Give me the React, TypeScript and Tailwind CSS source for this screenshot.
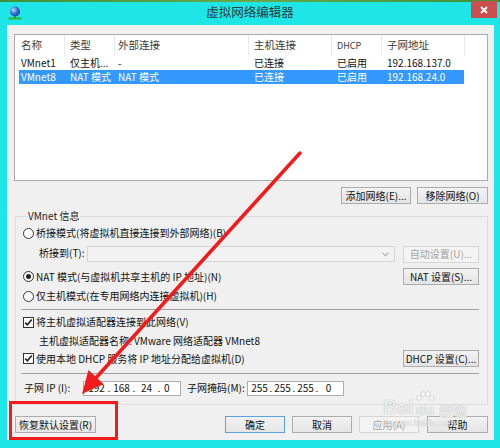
import React from "react";

const FONT = '"Noto Sans CJK SC", "Noto Sans", sans-serif';

function Btn({
  children,
  className = "",
  disabled = false,
  focused = false,
}: {
  children: React.ReactNode;
  className?: string;
  disabled?: boolean;
  focused?: boolean;
}) {
  const base =
    "h-[17px] flex items-center justify-center text-[10px] leading-none whitespace-nowrap border ";
  const look = disabled
    ? "border-[#d5d5d5] bg-[#f4f4f4] text-[#a3a3a3]"
    : focused
    ? "border-[#5ea1e6] bg-linear-to-b from-[#f2f2f2] to-[#e6e6e6] text-[#111]"
    : "border-[#acacac] bg-linear-to-b from-[#f2f2f2] to-[#e5e5e5] text-[#111]";
  return <div className={base + look + " " + className}>{children}</div>;
}

function Radio({ checked = false }: { checked?: boolean }) {
  return (
    <span className="w-[11px] h-[11px] rounded-full border border-[#333] bg-white flex items-center justify-center shrink-0">
      {checked && <span className="w-[5px] h-[5px] rounded-full bg-[#222]" />}
    </span>
  );
}

function Check() {
  return (
    <span className="w-[11px] h-[11px] border border-[#333] bg-white flex items-center justify-center shrink-0">
      <svg width="9" height="9" viewBox="0 0 9 9">
        <path d="M1.2 4.6 L3.4 6.8 L7.8 1.6" fill="none" stroke="#222" strokeWidth="1.6" />
      </svg>
    </span>
  );
}

export default function App() {
  return (
    <div
      className="relative w-[500px] h-[448px] overflow-hidden bg-[#1fe6e6] text-[#111] whitespace-nowrap"
      style={{ fontFamily: FONT }}
    >
      {/* desktop strip at very top */}
      <div className="absolute left-0 top-0 w-[500px] h-[2px] bg-linear-to-r from-[#3f8f3a] via-[#6aa84a] to-[#3f8f3a]" />

      {/* title bar */}
      <div className="relative h-[25px] flex items-start">
        <div className="w-[60px] h-[25px] flex items-start pl-[8px] pt-[6px]">
          <svg width="14" height="14" viewBox="0 0 14 14">
            <defs>
              <radialGradient id="g" cx="0.35" cy="0.35" r="0.7">
                <stop offset="0" stopColor="#b8dcff" />
                <stop offset="0.5" stopColor="#3b78d8" />
                <stop offset="1" stopColor="#1a3f9a" />
              </radialGradient>
            </defs>
            <circle cx="7" cy="5.5" r="5" fill="url(#g)" />
            <rect x="6.3" y="10" width="1.4" height="2" fill="#555" />
            <rect x="0.5" y="11.5" width="13" height="2" fill="#2fb52f" />
          </svg>
        </div>
        <div className="flex-1 h-[25px] flex items-center justify-center text-[12.5px] text-[#2c3b3b]">
          虚拟网络编辑器
        </div>
        <div className="w-[60px] h-[25px] flex justify-end pr-[3px] pt-[1px]">
          <div className="w-[26px] h-[17px] bg-[#c9504f] flex items-center justify-center">
            <svg width="8" height="8" viewBox="0 0 8 8">
              <path d="M1 1 L7 7 M7 1 L1 7" stroke="#fff" strokeWidth="1.8" />
            </svg>
          </div>
        </div>
      </div>

      {/* dialog client area */}
      <div className="ml-[7px] w-[487px] h-[415px] bg-[#f0f0f0] flex flex-col">
        {/* list view */}
        <div className="mt-[9px] ml-[7px] w-[474px] h-[147px] border border-[#a9abb0] bg-white text-[10px] leading-none">
          <div className="h-[21px] grid grid-cols-[50px_50px_134px_83px_50px_83px_1fr] text-[10.5px] text-[#3a3a3a]">
            <div className="border-r border-[#e6e9ee] pl-[6px] flex items-center">名称</div>
            <div className="border-r border-[#e6e9ee] pl-[5px] flex items-center">类型</div>
            <div className="border-r border-[#e6e9ee] pl-[3px] flex items-center">外部连接</div>
            <div className="border-r border-[#e6e9ee] pl-[5px] flex items-center">主机连接</div>
            <div className="border-r border-[#e6e9ee] pl-[5px] flex items-center text-[9px]">DHCP</div>
            <div className="border-r border-[#e6e9ee] pl-[5px] flex items-center">子网地址</div>
            <div />
          </div>
          <div className="ml-[4px] w-[445px] h-[14px] grid grid-cols-[46px_50px_134px_83px_50px_82px] items-center">
            <div className="pl-[2px]">VMnet1</div>
            <div className="pl-[5px]">仅主机...</div>
            <div className="pl-[3px]">-</div>
            <div className="pl-[5px]">已连接</div>
            <div className="pl-[5px]">已启用</div>
            <div className="pl-[5px]">192.168.137.0</div>
          </div>
          <div className="ml-[4px] w-[445px] h-[14px] grid grid-cols-[46px_50px_134px_83px_50px_82px] items-center bg-[#3399ff] text-white">
            <div className="pl-[2px]">VMnet8</div>
            <div className="pl-[5px]">NAT 模式</div>
            <div className="pl-[3px]">NAT 模式</div>
            <div className="pl-[5px]">已连接</div>
            <div className="pl-[5px]">已启用</div>
            <div className="pl-[5px]">192.168.24.0</div>
          </div>
        </div>

        {/* add / remove buttons */}
        <div className="mt-[6px] pr-[6px] flex justify-end gap-[6px]">
          <Btn className="w-[70px]">添加网络(E)...</Btn>
          <Btn className="w-[71px]">移除网络(O)</Btn>
        </div>

        {/* group box */}
        <fieldset className="mt-[5px] ml-[8px] w-[473px] border border-[#dcdcdc] pl-[7px] pr-[8px] pb-[8px] text-[10px] leading-none">
          <legend className="ml-[4px] px-[1px] h-[14px] leading-[14px] text-[#222]">VMnet 信息</legend>

          <div className="mt-[2px] h-[16px] flex items-center gap-[2px]">
            <Radio />
            <span>桥接模式(将虚拟机直接连接到外部网络)(B)</span>
          </div>

          <div className="mt-[5px] h-[16px] flex items-center">
            <span className="pl-[16px] w-[64px] -mt-[2px]">桥接到(T):</span>
            <div className="w-[308px] h-[16px] border border-[#d5d5d5] bg-[#f2f2f2] flex items-center justify-end pr-[5px]">
              <svg width="7" height="5" viewBox="0 0 7 5">
                <path d="M0.5 0.8 L3.5 3.8 L6.5 0.8" fill="none" stroke="#b0b0b0" strokeWidth="1.1" />
              </svg>
            </div>
            <Btn disabled className="ml-auto w-[76px] h-[16px]">自动设置(U)...</Btn>
          </div>

          <div className="mt-[6px] h-[17px] flex items-center gap-[2px]">
            <Radio checked />
            <span>NAT 模式(与虚拟机共享主机的 IP 地址)(N)</span>
            <Btn className="ml-auto w-[76px]">NAT 设置(S)...</Btn>
          </div>

          <div className="mt-[3px] h-[16px] flex items-center gap-[2px]">
            <Radio />
            <span>仅主机模式(在专用网络内连接虚拟机)(H)</span>
          </div>

          <div className="mt-[5px] -ml-[2px] h-[1px] bg-[#a0a0a0]" />

          <div className="mt-[4px] h-[16px] flex items-center gap-[2px]">
            <Check />
            <span>将主机虚拟适配器连接到此网络(V)</span>
          </div>

          <div className="mt-[3px] h-[16px] flex items-center pl-[16px]">
            主机虚拟适配器名称: VMware 网络适配器 VMnet8
          </div>

          <div className="mt-[1px] h-[17px] flex items-center gap-[2px]">
            <Check />
            <span>使用本地 DHCP 服务将 IP 地址分配给虚拟机(D)</span>
            <Btn className="ml-auto w-[76px]">DHCP 设置(C)...</Btn>
          </div>

          <div className="mt-[6px] -ml-[2px] h-[1px] bg-[#a0a0a0]" />

          <div className="mt-[6px] h-[16px] flex items-center">
            <span className="pl-[1px] w-[60px]">子网 IP (I):</span>
            <div className="w-[98px] h-[15px] border border-[#abadb3] bg-white flex items-center pl-[2px]">
              <span className="w-[21px] text-center">192</span>
              <span className="w-[4px] text-center">.</span>
              <span className="w-[21px] text-center">168</span>
              <span className="w-[4px] text-center">.</span>
              <span className="w-[21px] text-center">24</span>
              <span className="w-[4px] text-center">.</span>
              <span className="pl-[3px]">0</span>
            </div>
            <span className="ml-[6px] w-[60px]">子网掩码(M):</span>
            <div className="w-[97px] h-[15px] border border-[#abadb3] bg-white flex items-center pl-[2px]">
              <span className="w-[19px] text-center">255</span>
              <span className="w-[4px] text-center">.</span>
              <span className="w-[19px] text-center">255</span>
              <span className="w-[4px] text-center">.</span>
              <span className="w-[19px] text-center">255</span>
              <span className="w-[4px] text-center">.</span>
              <span className="w-[19px] text-center">0</span>
            </div>
          </div>
        </fieldset>

        {/* bottom buttons */}
        <div className="mt-[11px] pl-[8px] pr-[6px] flex items-center">
          <Btn className="w-[81px]">恢复默认设置(R)</Btn>
          <div className="ml-auto flex gap-[7px]">
            <Btn focused className="w-[60px]">确定</Btn>
            <Btn className="w-[60px]">取消</Btn>
            <Btn disabled className="w-[60px]">应用(A)</Btn>
            <Btn className="w-[61px] ml-[1px]">帮助</Btn>
          </div>
        </div>
      </div>

      {/* Baidu watermark (faint, over the buttons) */}
      <div className="absolute left-[383px] top-[393px] pointer-events-none text-white/75 [text-shadow:0_0_1px_#a5a5a5]">
        <div className="flex items-end leading-none">
          <span className="text-[20px] font-bold" style={{ fontFamily: '"Liberation Sans", sans-serif' }}>Bai</span>
          <span className="relative w-[22px] h-[24px] flex items-end justify-center">
            <svg className="absolute left-[1px] top-[-2px]" width="20" height="14" viewBox="0 0 20 14">
              <circle cx="4" cy="7" r="2.3" fill="#fff" fillOpacity="0.75" stroke="#b5b5b5" strokeWidth="0.5" />
              <circle cx="8" cy="3" r="2.3" fill="#fff" fillOpacity="0.75" stroke="#b5b5b5" strokeWidth="0.5" />
              <circle cx="13" cy="3" r="2.3" fill="#fff" fillOpacity="0.75" stroke="#b5b5b5" strokeWidth="0.5" />
              <circle cx="17" cy="7" r="2.3" fill="#fff" fillOpacity="0.75" stroke="#b5b5b5" strokeWidth="0.5" />
            </svg>
            <span className="text-[15px] font-bold" style={{ fontFamily: '"Liberation Sans", sans-serif' }}>du</span>
          </span>
          <span className="ml-[3px] text-[14px] font-bold">经验</span>
        </div>
        <div className="text-[9px] leading-none mt-[2px]" style={{ fontFamily: '"Liberation Sans", sans-serif' }}>
          jingyan.baidu.com
        </div>
      </div>

      {/* red annotation: rectangle */}
      <div className="absolute left-[9px] top-[401px] w-[109px] h-[39px] border-[3px] border-[#f21b1b] pointer-events-none" />

      {/* red annotation: arrow */}
      <svg className="absolute left-0 top-0 pointer-events-none" width="500" height="448" viewBox="0 0 500 448">
        <line x1="300" y1="153" x2="94" y2="380" stroke="#f21b1b" strokeWidth="3.5" strokeLinecap="round" />
        <polygon points="82,394 103.5,384 88.5,370" fill="#f21b1b" />
      </svg>
    </div>
  );
}
